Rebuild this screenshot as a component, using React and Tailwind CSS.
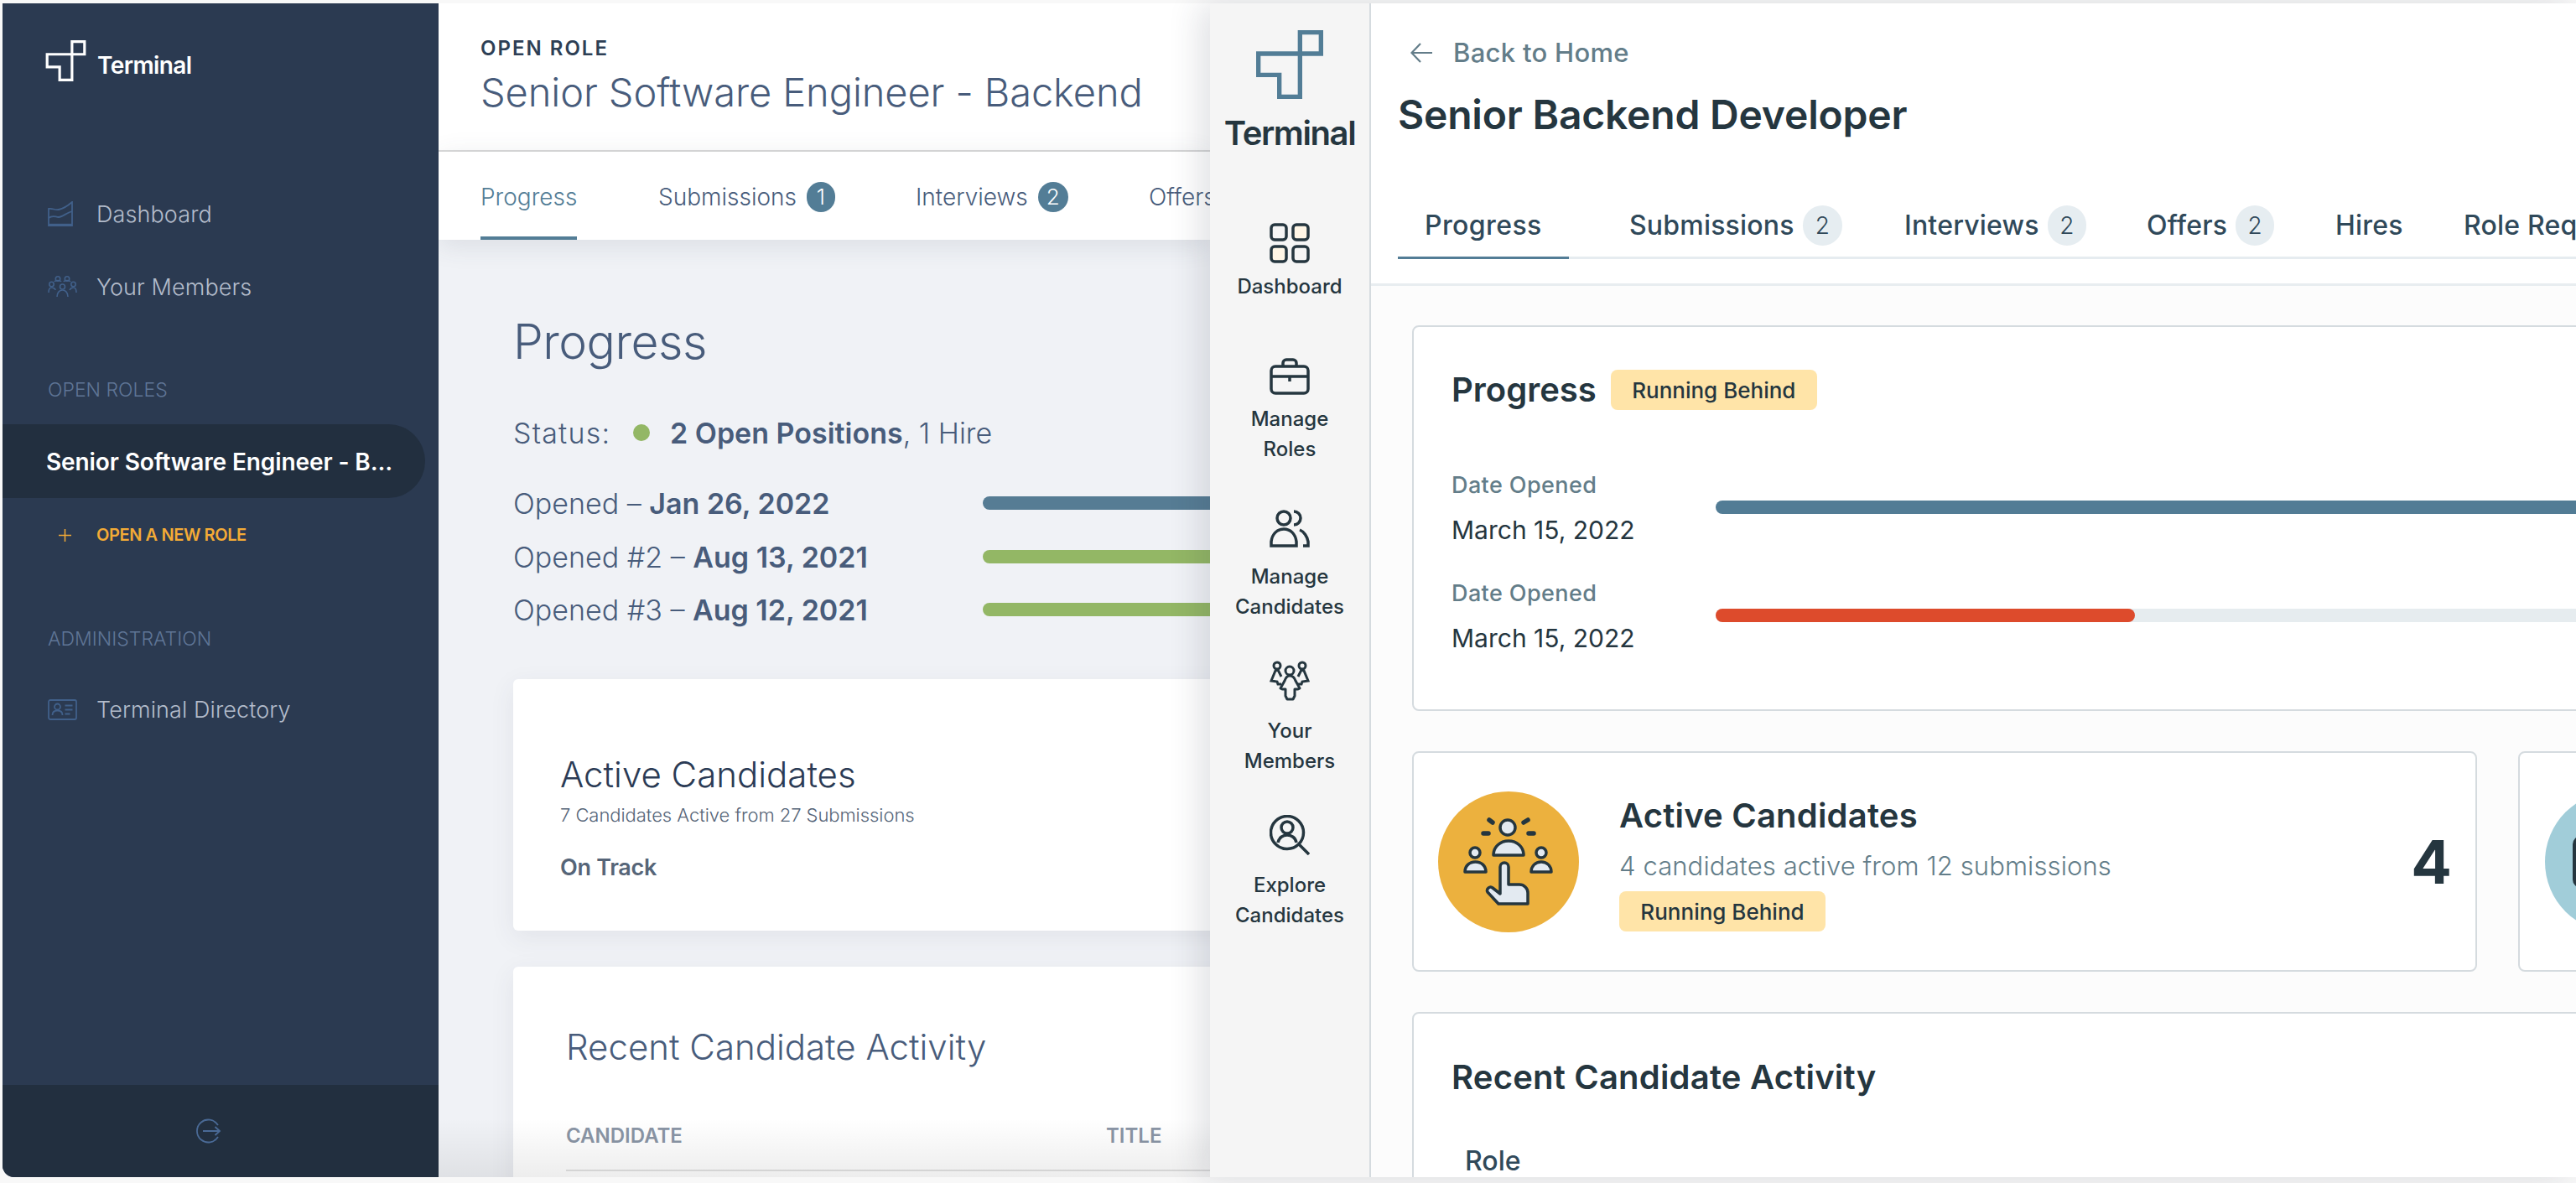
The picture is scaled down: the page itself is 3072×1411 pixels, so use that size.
const TerminalLogo = ({ className, color }) => (
  <svg className={className} viewBox="207 108 240 246" fill="none">
    <path d="M364 346V116H439V192H215V268H290V346Z" stroke={color} strokeWidth="16" />
  </svg>
);

const sideIcon = "shrink-0 text-[#41608a]";

const ChartIcon = () => (
  <svg className={sideIcon} width="30" height="30" viewBox="0 0 30 30" fill="none" stroke="currentColor" strokeWidth="1.8">
    <path d="M1 29V9c5-1 7 2 12 1s9-3 16-9v28Z" />
    <path d="M1 20c5-4 8-1 12-1s9-5 16-7" />
    <path d="M1 28h28" strokeWidth="2.4" />
  </svg>
);

const TeamIcon = () => (
  <svg className={sideIcon} width="35" height="26" viewBox="0 0 35 26" fill="none" stroke="currentColor" strokeWidth="1.6">
    <circle cx="12" cy="3.5" r="2.7" />
    <circle cx="23" cy="3.5" r="2.7" />
    <circle cx="4.5" cy="10" r="2.7" />
    <circle cx="30.5" cy="10" r="2.7" />
    <circle cx="17.5" cy="13" r="3" />
    <path d="M1 20c0-5 2-6 3.5-6S9 15 9 17M34 20c0-5-2-6-3.5-6s-3.5 1-4.500 3" />
    <path d="M11 25c0-5 3-8 6.500-8s6.500 3 6.500 8" />
    <path d="M8 7c1-2 7-2 8 0M19 7c1-2 7-2 8 0" />
  </svg>
);

const CardIcon = () => (
  <svg className={sideIcon} width="35" height="25" viewBox="0 0 35 25" fill="none" stroke="currentColor" strokeWidth="1.8">
    <rect x="1" y="1" width="33" height="23" rx="2" />
    <circle cx="11.500" cy="9" r="3.500" />
    <path d="M5.500 19c0-4 3-5.500 6-5.500s6 1.500 6 5.500" />
    <path d="M20.500 7.500h9M20.500 12.500h9M20.500 17.500h6" />
  </svg>
);

const SideNavItem = ({ icon, label, className }) => (
  <div className={`flex h-[60px] items-center ${className}`}>
    <div className="flex w-[58px] shrink-0 justify-start">{icon}</div>
    <span className="pt-[2px] text-[27px] font-light tracking-[0.1px] text-[#b3bccb]">{label}</span>
  </div>
);

const Sidebar = () => (
  <aside className="flex h-full w-[520px] shrink-0 flex-col overflow-hidden rounded-bl-[14px] bg-[#2b3a51]">
    <div className="ml-[51px] mt-[44px] flex h-[49px] items-end">
      <TerminalLogo className="h-[49px] w-[49px]" color="#ffffff" />
      <span className="mb-[4px] ml-[13px] text-[28px] font-semibold leading-[30px] tracking-[-0.6px] text-white">Terminal</span>
    </div>
    <SideNavItem className="ml-[54px] mt-[128px]" icon={<ChartIcon />} label="Dashboard" />
    <SideNavItem className="ml-[54px] mt-[27px]" icon={<TeamIcon />} label="Your Members" />
    <div className="ml-[54px] mt-[78px] flex h-[30px] items-center text-[23px] font-light text-[#5f7596]">OPEN ROLES</div>
    <div className="mt-[26px] flex h-[88px] w-[504px] items-center rounded-r-[44px] bg-[#222f3f] pl-[52px] pt-[2px] text-[28px] font-semibold tracking-[-0.1px] text-white">
      Senior Software Engineer - B...
    </div>
    <div className="ml-[67px] mt-[29px] flex h-[30px] items-center">
      <svg width="15" height="15" viewBox="0 0 15 15" stroke="#f4ab36" strokeWidth="1.500">
        <path d="M7.500 0v15M0 7.500h15" />
      </svg>
      <span className="ml-[30px] text-[20px] font-semibold tracking-[-0.4px] text-[#f4ab36]">OPEN A NEW ROLE</span>
    </div>
    <div className="ml-[54px] mt-[94px] flex h-[30px] items-center text-[23px] font-light text-[#5f7596]">ADMINISTRATION</div>
    <SideNavItem className="ml-[54px] mt-[39px]" icon={<CardIcon />} label="Terminal Directory" />
    <div className="mt-auto flex h-[110px] items-center justify-center bg-[#222f3f] pr-[28px]">
      <svg width="30" height="30" viewBox="0 0 30 30" fill="none" stroke="#4a6a96" strokeWidth="1.800">
        <path d="M26 8A13.500 13.500 0 1 0 26 22" />
        <path d="M8 15h20M22.500 10l5.500 5-5.500 5" />
      </svg>
    </div>
  </aside>
);

const LeftTab = ({ label, count, active, className }) => (
  <div className={`flex h-full shrink-0 items-center border-b-[4px] pt-[6px] ${active ? "border-[#537d96]" : "border-transparent"} ${className}`}>
    <span className={`text-[28px] font-light ${active ? "text-[#537d96]" : "text-[#485c7b]"}`}>{label}</span>
    {count && (
      <span className="ml-[12px] flex h-[36px] w-[36px] items-center justify-center rounded-full bg-[#537d96] text-[26px] font-light text-white">
        {count}
      </span>
    )}
  </div>
);

const OpenedRow = ({ label, date, color, className }) => (
  <div className={`flex h-[44px] items-center ${className}`}>
    <div className="w-[560px] shrink-0 text-[34px] font-light text-[#485c7b]">
      {label} <span className="font-semibold">{date}</span>
    </div>
    <div className={`h-[16px] w-[600px] rounded-l-full ${color}`} />
  </div>
);

const OldRolePage = () => (
  <main className="relative flex h-full w-[920px] shrink-0 flex-col overflow-hidden bg-[#f0f2f6]">
    <header className="h-[177px] shrink-0 border-b-2 border-[#dadada] bg-white pl-[50px] pt-[39px]">
      <div className="flex h-[30px] items-center text-[24px] font-semibold tracking-[2px] text-[#2e3f55]">OPEN ROLE</div>
      <h1 className="mt-[7px] flex h-[60px] items-center whitespace-nowrap text-[47px] font-light tracking-[-0.1px] text-[#485c7b]">
        Senior Software Engineer - Backend
      </h1>
    </header>
    <nav className="relative z-[1] flex h-[105px] shrink-0 whitespace-nowrap bg-white pl-[50px] shadow-[0_6px_30px_rgba(60,70,90,0.12)]">
      <LeftTab label="Progress" active className="w-[115px]" />
      <LeftTab label="Submissions" count="1" className="ml-[97px] w-[211px]" />
      <LeftTab label="Interviews" count="2" className="ml-[96px] w-[183px]" />
      <LeftTab label="Offers" className="ml-[95px]" />
    </nav>
    <section className="w-[1200px] pl-[89px] pt-[87px]">
      <h2 className="flex h-[70px] items-center text-[57px] font-light tracking-[-0.5px] text-[#485c7b]">Progress</h2>
      <div className="mt-[51px] flex h-[44px] items-center text-[34px] font-light text-[#485c7b]">
        <span className="w-[116px] tracking-[1.200px]">Status:</span>
        <span className="ml-[27px] h-[20px] w-[20px] rounded-full bg-[#93b765]" />
        <span className="ml-[24px]"><span className="font-semibold">2 Open Positions</span>, 1 Hire</span>
      </div>
      <OpenedRow className="mt-[40px]" label="Opened –" date="Jan 26, 2022" color="bg-[#567c94]" />
      <OpenedRow className="mt-[20px]" label="Opened #2 –" date="Aug 13, 2021" color="bg-[#93b765]" />
      <OpenedRow className="mt-[19px]" label="Opened #3 –" date="Aug 12, 2021" color="bg-[#93b765]" />
      <div className="mt-[61px] h-[300px] w-[1000px] rounded-[6px] bg-white pl-[56px] pt-[85px] shadow-[0_8px_30px_rgba(60,70,90,0.08)]">
        <h3 className="flex h-[56px] items-center text-[42px] font-light text-[#2b3b55]">Active Candidates</h3>
        <p className="mt-[6px] flex h-[30px] items-center text-[22px] font-light tracking-[-0.05px] text-[#566578]">7 Candidates Active from 27 Submissions</p>
        <p className="mt-[30px] flex h-[36px] items-center text-[27px] font-semibold tracking-[-0.3px] text-[#566578]">On Track</p>
      </div>
      <div className="mt-[43px] h-[400px] w-[1000px] rounded-[6px] bg-white pl-[63px] pt-[67px] shadow-[0_8px_30px_rgba(60,70,90,0.08)]">
        <h3 className="flex h-[56px] items-center text-[42px] font-light text-[#485c7b]">Recent Candidate Activity</h3>
        <div className="mt-[64px] flex h-[30px] items-center text-[24px] font-semibold text-[#8a95a5]">
          <span className="w-[644px]">CANDIDATE</span>
          <span>TITLE</span>
        </div>
        <div className="mt-[25px] h-[2px] bg-[#e2e2e2]" />
      </div>
    </section>
    <div className="pointer-events-none absolute inset-x-0 bottom-0 z-[1] h-[70px] bg-gradient-to-b from-transparent to-[#00000012]" />
  </main>
);

const railIcon = { fill: "none", stroke: "#25363f", strokeWidth: 3.5 };

const GridIcon = () => (
  <svg width="48" height="48" viewBox="0 0 48 48" {...railIcon}>
    <rect x="2" y="2" width="18" height="18" rx="4" />
    <rect x="28" y="2" width="18" height="18" rx="4" fill="#fff6e6" />
    <rect x="2" y="28" width="18" height="18" rx="4" fill="#fff6e6" />
    <rect x="28" y="28" width="18" height="18" rx="4" />
  </svg>
);

const BriefcaseIcon = () => (
  <svg width="48" height="44" viewBox="0 0 48 44" {...railIcon}>
    <rect x="2" y="10" width="44" height="32" rx="5" />
    <path d="M16 10V6a4 4 0 0 1 4-4h8a4 4 0 0 1 4 4v4M2 22h44M24 22v6" />
  </svg>
);

const PeopleIcon = () => (
  <svg width="48" height="46" viewBox="0 0 48 46" {...railIcon}>
    <circle cx="17" cy="11" r="8" />
    <path d="M29 3a8 8 0 0 1 0 16" />
    <path d="M2 44c0-1 0-4 0-5 1-9 7-15 15-15s14 6 15 15v5Z" />
    <path d="M36 25c5 2 9 8 10 14v5h-6" />
  </svg>
);

const MembersIcon = () => (
  <svg width="48" height="48" viewBox="0 0 48 48" {...railIcon} strokeWidth="3">
    <circle cx="9" cy="6" r="4" />
    <circle cx="39" cy="6" r="4" />
    <circle cx="24" cy="12" r="5" />
    <path d="M14 19 10 11 7 12 2 24l7 1 1 3h4M34 19l4-8 3 1 5 12-7 1-1 3h-4" />
    <path d="M24 18c-3 0-5 3-6 6l-5 9 2 1h4v8l2 4h7l2-4v-8h4l2-1-5-9c-1-3-3-6-7-6Z" strokeLinejoin="round" />
  </svg>
);

const ExploreIcon = () => (
  <svg width="48" height="48" viewBox="0 0 48 48" {...railIcon}>
    <circle cx="21" cy="21" r="19.500" />
    <circle cx="21" cy="15" r="7" />
    <path d="M10 33c1-6 6-9 11-9s10 3 11 9M35 35l12 12" />
  </svg>
);

const RailItem = ({ icon, lines, iconH, className }) => (
  <div className={`flex flex-col items-center ${className}`}>
    <div className={`flex items-center justify-center ${iconH}`}>{icon}</div>
    {lines.map((line) => (
      <span key={line} className="flex h-[36px] items-center text-[24px] font-medium text-[#25363f]">{line}</span>
    ))}
  </div>
);

const Rail = () => (
  <aside className="flex h-full w-[192px] shrink-0 flex-col items-center border-r-2 border-[#d5dbdf] bg-[#f5f5f5]">
    <TerminalLogo className="mt-[32px] h-[82px] w-[80px]" color="#527d96" />
    <span className="mt-[19px] flex h-[44px] items-center text-[40px] font-semibold tracking-[-1.4px] text-[#25363f]">Terminal</span>
    <RailItem className="mt-[85px]" iconH="h-[48px] mb-[10px]" icon={<GridIcon />} lines={["Dashboard"]} />
    <RailItem className="mt-[67px]" iconH="h-[44px] mb-[11px]" icon={<BriefcaseIcon />} lines={["Manage", "Roles"]} />
    <RailItem className="mt-[53px]" iconH="h-[46px] mb-[17px]" icon={<PeopleIcon />} lines={["Manage", "Candidates"]} />
    <RailItem className="mt-[46px]" iconH="h-[48px] mb-[18px]" icon={<MembersIcon />} lines={["Your", "Members"]} />
    <RailItem className="mt-[46px]" iconH="h-[48px] mb-[18px]" icon={<ExploreIcon />} lines={["Explore", "Candidates"]} />
  </aside>
);

const NewTab = ({ label, count, className }) => (
  <div className={`flex h-full shrink-0 items-center pt-[2px] ${className}`}>
    <span className="text-[32px] font-medium tracking-[0.2px] text-[#30495a]">{label}</span>
    {count && (
      <span className="ml-[10px] flex h-[48px] w-[47px] items-center justify-center rounded-full bg-[#e6edf1] text-[28px] font-light text-[#30495a]">
        {count}
      </span>
    )}
  </div>
);

const RunningBehind = () => (
  <span className="flex h-[48px] w-[246px] shrink-0 items-center justify-center rounded-[8px] bg-[#ffe4a8] text-[26px] font-medium text-[#25363f]">
    Running Behind
  </span>
);

const DateRow = ({ className, fill }) => (
  <div className={`flex items-start ${className}`}>
    <div className="w-[315px] shrink-0">
      <div className="flex h-[30px] items-center text-[27px] font-medium tracking-[0.4px] text-[#637d89]">Date Opened</div>
      <div className="mt-[20px] flex h-[36px] items-center text-[30px] font-normal text-[#25363f]">March 15, 2022</div>
    </div>
    <div className="mt-[33px] h-[16px] flex-1 overflow-hidden rounded-l-full bg-[#e6ecef]">{fill}</div>
  </div>
);

const HandIcon = () => (
  <svg width="168" height="168" viewBox="0 0 168 168" fill="#e3eaf1" stroke="#25363f" strokeWidth="3.500" strokeLinejoin="round">
    <circle cx="83" cy="43" r="9" />
    <path d="M66 76c0-10 8-17 18-17s18 7 18 17Z" />
    <circle cx="44" cy="73" r="6" />
    <path d="M32 96c0-7 5-12 12.500-12S57 89 57 96Z" />
    <circle cx="123" cy="73" r="6" />
    <path d="M111 96c0-7 5-12 12-12s12 5 12 12Z" />
    <path d="M74 90a5 5 0 0 1 10 0v21h13a10 10 0 0 1 10 10v13H72L59 120a4 4 0 0 1 6-5l9 7Z" />
    <path d="M61 34l4 3M54 50h6M102 37l5-3M108 50h6" strokeWidth="5.500" strokeLinecap="round" />
  </svg>
);

const NewRolePage = () => (
  <main className="h-full min-w-0 flex-1 overflow-hidden bg-[#fcfcfc]">
    <header className="h-[337px] w-[1500px] border-b-[3px] border-[#e8edf0] bg-white pt-[39px]">
      <div className="ml-[47px] flex h-[40px] items-center">
        <svg width="26" height="26" viewBox="0 0 26 26" fill="none" stroke="#637d89" strokeWidth="2.200">
          <path d="M26 13H2M12 2 1.500 13 12 24" />
        </svg>
        <span className="ml-[25px] text-[31px] font-medium tracking-[0.3px] text-[#637d89]">Back to Home</span>
      </div>
      <h1 className="ml-[32px] mt-[24px] flex h-[60px] items-center text-[48px] font-semibold tracking-[-0.2px] text-[#25363f]">
        Senior Backend Developer
      </h1>
      <nav className="ml-[32px] mt-[62px] flex h-[80px] border-b-[3px] border-[#e6ecf0] whitespace-nowrap">
        <div className="-mb-[3px] flex h-[80px] w-[204px] shrink-0 items-center border-b-[3px] border-[#537d96] pl-[32px] pt-[2px]">
          <span className="text-[32px] font-medium tracking-[0.4px] text-[#30495a]">Progress</span>
        </div>
        <NewTab label="Submissions" count="2" className="ml-[72px] w-[255px]" />
        <NewTab label="Interviews" count="2" className="ml-[73px] w-[217px]" />
        <NewTab label="Offers" count="2" className="ml-[72px] w-[152px]" />
        <NewTab label="Hires" className="ml-[73px] w-[80px]" />
        <NewTab label="Role Requirements" className="ml-[73px]" />
      </nav>
    </header>
    <section className="w-[2000px] pl-[49px] pt-[47px]">
      <div className="h-[460px] w-[1500px] rounded-[8px] border-2 border-[#d5dbdf] bg-white pl-[45px] pt-[51px]">
        <div className="flex h-[48px] items-center">
          <h2 className="text-[40px] font-semibold text-[#25363f]">Progress</h2>
          <div className="ml-[17px]"><RunningBehind /></div>
        </div>
        <DateRow className="mt-[75px]" fill={<div className="h-full w-full bg-[#527c95]" />} />
        <DateRow className="mt-[43px]" fill={<div className="h-full w-[500px] rounded-r-full bg-[#dd4b2c]" />} />
      </div>
      <div className="mt-[48px] flex">
        <div className="flex h-[263px] w-[1270px] shrink-0 items-center rounded-[8px] border-2 border-[#d5dbdf] bg-white pl-[29px] pr-[28px]">
          <div className="h-[168px] w-[168px] shrink-0 rounded-full bg-[#ecb13e]"><HandIcon /></div>
          <div className="ml-[48px]">
            <h3 className="flex h-[56px] items-center pt-[2px] text-[40px] font-semibold tracking-[0.2px] text-[#25363f]">Active Candidates</h3>
            <p className="mt-[14px] flex h-[36px] items-center pt-[2px] text-[31px] font-light tracking-[0.1px] text-[#637d89]">4 candidates active from 12 submissions</p>
            <div className="mt-[13px]"><RunningBehind /></div>
          </div>
          <span className="ml-auto text-[72px] font-bold leading-none text-[#25363f]">4</span>
        </div>
        <div className="ml-[49px] flex h-[263px] w-[600px] shrink-0 items-center rounded-[8px] border-2 border-[#d5dbdf] bg-white pl-[30px]">
          <div className="flex h-[168px] w-[168px] items-center rounded-full bg-[#a1cdd9] pl-[33px]">
            <div className="h-[62px] w-[60px] rounded-[10px] bg-[#25363f]" />
          </div>
        </div>
      </div>
      <div className="mt-[48px] h-[400px] w-[1500px] rounded-[8px] border-2 border-[#d5dbdf] bg-white pl-[45px] pt-[48px]">
        <h3 className="flex h-[56px] items-center text-[40px] font-semibold tracking-[0.2px] text-[#25363f]">Recent Candidate Activity</h3>
        <div className="ml-[16px] mt-[52px] flex h-[40px] items-center text-[32px] font-medium text-[#30495a]">Role</div>
      </div>
    </section>
  </main>
);

export default function App() {
  return (
    <div className="flex h-[1411px] w-[3072px] overflow-hidden bg-[#f8f8f8] pb-[7px] pl-[3px] pt-[4px] [font-family:Inter,sans-serif]">
      <div className="flex h-full shrink-0">
        <Sidebar />
        <OldRolePage />
      </div>
      <div className="relative z-10 flex h-full min-w-0 flex-1 shadow-[-12px_0_36px_rgba(40,50,70,0.14)]">
        <Rail />
        <NewRolePage />
      </div>
    </div>
  );
}
